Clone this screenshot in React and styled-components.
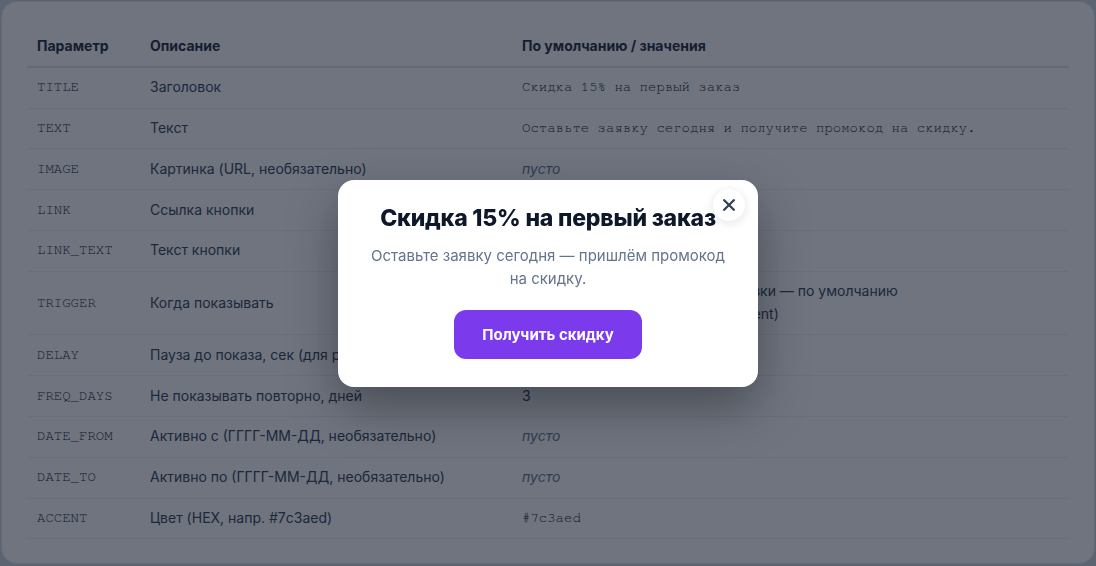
import React from "react";
import styled, { createGlobalStyle } from "styled-components";

const GlobalStyle = createGlobalStyle`
  html, body {
    margin: 0;
    padding: 0;
    background: #cfd6df;
  }
  body {
    font-family: Inter, "Noto Sans", Roboto, sans-serif;
    color: #334155;
  }
  #root {
    padding: 1px;
  }
  * {
    box-sizing: border-box;
  }
`;

const Card = styled.section`
  background: #ffffff;
  border: 1px solid #e2e8f0;
  border-radius: 16px;
  padding: 24px 25px;
`;

const Table = styled.table`
  width: 100%;
  border-collapse: collapse;
  table-layout: fixed;
  font-size: 14px;
  line-height: 22.8px;
`;

const HeadCell = styled.th`
  text-align: left;
  font-weight: 700;
  color: #1e293b;
  padding: 8.5px 10px;
  border-bottom: 2px solid #e2e8f0;
  width: ${(p) => p.$w || "auto"};
`;

const Row = styled.tr`
  border-bottom: 1px solid #eef2f6;
`;

const Cell = styled.td`
  padding: 8.5px 10px;
  vertical-align: middle;
  color: #334155;
`;

const Code = styled.code`
  display: inline-block;
  vertical-align: top;
  line-height: 22.8px;
  font-family: "Nimbus Mono PS", "FreeMono", "Courier New", "Liberation Mono", monospace;
  font-size: 14px;
  color: #0f172a;
`;

const Empty = styled.em`
  color: #64748b;
  font-style: italic;
`;

const Overlay = styled.div`
  position: fixed;
  inset: 0;
  background: rgba(15, 23, 42, 0.6);
  display: flex;
  align-items: center;
  justify-content: center;
`;

const Modal = styled.div`
  position: relative;
  width: 420px;
  background: #ffffff;
  border-radius: 16px;
  padding: 24px 28px 28px;
  text-align: center;
  box-shadow: 0 20px 50px rgba(0, 0, 0, 0.35);
`;

const CloseButton = styled.button`
  position: absolute;
  top: 9px;
  right: 13px;
  width: 32px;
  height: 32px;
  border: none;
  border-radius: 50%;
  background: #ffffff;
  box-shadow: 0 2px 10px rgba(15, 23, 42, 0.12);
  display: flex;
  align-items: center;
  justify-content: center;
  padding: 0;
  cursor: pointer;
`;

const Title = styled.h2`
  margin: 0 0 12px;
  font-size: 23px;
  line-height: 28px;
  font-weight: 800;
  color: #0f172a;
  letter-spacing: -0.2px;
`;

const Subtitle = styled.p`
  margin: 0 0 20px;
  font-size: 15px;
  line-height: 23px;
  color: #64748b;
`;

const ActionButton = styled.button`
  border: none;
  border-radius: 12px;
  background: ${(p) => p.$accent};
  color: #ffffff;
  font-family: inherit;
  font-size: 15px;
  font-weight: 700;
  line-height: 21px;
  padding: 14px 28px;
  cursor: pointer;
`;

const params = [
  { key: "TITLE", desc: "Заголовок", value: <Code>Скидка 15% на первый заказ</Code> },
  { key: "TEXT", desc: "Текст", value: <Code>Оставьте заявку сегодня и получите промокод на скидку.</Code> },
  { key: "IMAGE", desc: "Картинка (URL, необязательно)", value: <Empty>пусто</Empty> },
  { key: "LINK", desc: "Ссылка кнопки", value: <Code>#</Code> },
  { key: "LINK_TEXT", desc: "Текст кнопки", value: <Code>Получить скидку</Code> },
  {
    key: "TRIGGER",
    desc: "Когда показывать",
    value: (
      <>
        delay — спустя паузу после загрузки — по умолчанию
        <br />
        exit — при попытке ухода (exit-intent)
      </>
    ),
  },
  { key: "DELAY", desc: "Пауза до показа, сек (для режима delay)", value: "5" },
  { key: "FREQ_DAYS", desc: "Не показывать повторно, дней", value: "3" },
  { key: "DATE_FROM", desc: "Активно с (ГГГГ-ММ-ДД, необязательно)", value: <Empty>пусто</Empty> },
  { key: "DATE_TO", desc: "Активно по (ГГГГ-ММ-ДД, необязательно)", value: <Empty>пусто</Empty> },
  { key: "ACCENT", desc: "Цвет (HEX, напр. #7c3aed)", value: <Code>#7c3aed</Code> },
];

function CloseIcon() {
  return (
    <svg width="12" height="12" viewBox="0 0 12 12" aria-hidden="true">
      <path d="M1.2 1.2 10.8 10.8 M10.8 1.2 1.2 10.8" stroke="#334155" strokeWidth="2.3" strokeLinecap="round" />
    </svg>
  );
}

export default function App() {
  return (
    <>
      <GlobalStyle />
      <Card>
        <Table>
          <thead>
            <tr>
              <HeadCell $w="113px">Параметр</HeadCell>
              <HeadCell $w="372px">Описание</HeadCell>
              <HeadCell>По умолчанию / значения</HeadCell>
            </tr>
          </thead>
          <tbody>
            {params.map((p) => (
              <Row key={p.key}>
                <Cell>
                  <Code>{p.key}</Code>
                </Cell>
                <Cell>{p.desc}</Cell>
                <Cell>{p.value}</Cell>
              </Row>
            ))}
          </tbody>
        </Table>
      </Card>
      <Overlay>
        <Modal role="dialog">
          <CloseButton aria-label="Закрыть">
            <CloseIcon />
          </CloseButton>
          <Title>Скидка 15% на первый заказ</Title>
          <Subtitle>Оставьте заявку сегодня — пришлём промокод на скидку.</Subtitle>
          <ActionButton $accent="#7c3aed">Получить скидку</ActionButton>
        </Modal>
      </Overlay>
    </>
  );
}
